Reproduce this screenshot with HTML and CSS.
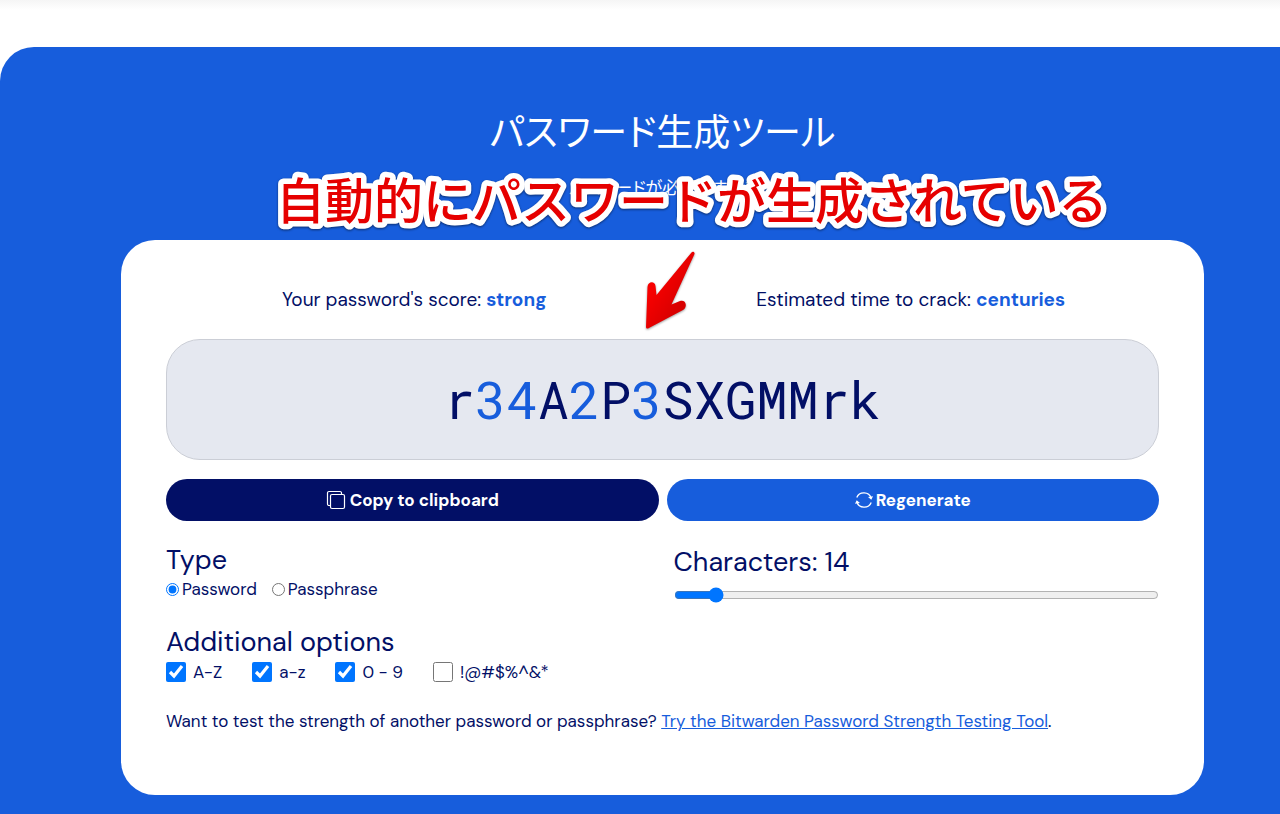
FILE: index.html
```html
<!DOCTYPE html>
<html lang="ja">
<head>
<meta charset="UTF-8">
<meta name="viewport" content="width=device-width, initial-scale=1.0">
<title>パスワード生成ツール</title>
<link rel="stylesheet" href="styles.css">
</head>
<body>

<main class="hero">
    <h1>パスワード生成ツール</h1>
    <p class="subtitle">パスワードが必要ですか？</p>

    <section class="card" lang="en">
        <div class="scores">
            <p>Your password's score: <strong>strong</strong></p>
            <p>Estimated time to crack: <strong>centuries</strong></p>
        </div>

        <div class="password">r<span>34</span>A<span>2</span>P<span>3</span>SXGMMrk</div>

        <div class="actions">
            <button type="button" class="copy">
                <svg width="20" height="20" viewBox="0 0 20 20" fill="none" stroke="currentColor" stroke-width="1.2">
                    <rect x="4.500" y="4.500" width="14" height="14" rx="1.500"/>
                    <path d="M4.500 15.500H3A1.500 1.500 0 0 1 1.500 14V3A1.500 1.500 0 0 1 3 1.500H14A1.500 1.500 0 0 1 15.500 3V4.500"/>
                </svg>
                Copy to clipboard
            </button>
            <button type="button" class="regenerate">
                <svg width="18" height="18" viewBox="0 0 18 18" fill="none" stroke="currentColor" stroke-width="1.3">
                    <path d="M1.800 6.500A7.500 7 0 0 1 16.100 7M16.200 11.500A7.500 7 0 0 1 1.900 11"/>
                    <path d="M13 6L18 5.200L16.300 8.800ZM5 12L0 12.800L1.700 9.200Z" fill="currentColor" stroke="none"/>
                </svg>
                Regenerate
            </button>
        </div>

        <div class="settings">
            <fieldset>
                <legend>Type</legend>
                <div class="types">
                    <label><input type="radio" name="type" checked>Password</label>
                    <label><input type="radio" name="type">Passphrase</label>
                </div>
            </fieldset>
            <div class="length">
                <label for="length">Characters: <output id="count" for="length">14</output></label>
                <input type="range" id="length" min="5" max="128" value="14">
            </div>
        </div>

        <fieldset>
            <legend>Additional options</legend>
            <div class="options">
                <label><input type="checkbox" checked>A-Z</label>
                <label><input type="checkbox" checked>a-z</label>
                <label><input type="checkbox" checked>0 - 9</label>
                <label><input type="checkbox">!@#$%^&amp;*</label>
            </div>
        </fieldset>

        <p class="more">Want to test the strength of another password or passphrase? <a href="#">Try the Bitwarden Password Strength Testing Tool</a>.</p>
    </section>

    <svg class="note" width="860" height="90">
        <text x="6" y="63">自動的にパスワードが生成されている</text>
    </svg>
    <svg class="arrow" width="52" height="80" viewBox="0 0 52 80">
        <defs>
            <linearGradient id="red" x1="0" y1="0" x2="1" y2="1">
                <stop offset="0.300" stop-color="#f80000"/>
                <stop offset="0.700" stop-color="#d80000"/>
            </linearGradient>
        </defs>
        <path d="M46.500 2.500C47.500 1 50 2 49.500 4L26.500 54.500L35 51C41 49 43 57 38 60L3 78.500Q1 79 1 77L2.500 37C3 31 10 31 10.500 36L11.500 45Z" fill="url(#red)"/>
    </svg>
</main>

<script>
document.getElementById("length").addEventListener("input", function() {
    document.getElementById("count").textContent = this.value;
});
</script>

</body>
</html>
```
FILE: styles.css
```css
* {
    box-sizing: border-box;
}

body {
    margin: 0;
    padding-top: 47px;
    background: linear-gradient(#f5f5f5, #fff 10px);
    color: #020f66;
    font-family: "DM Sans", "Open Sans", "Noto Sans CJK JP", sans-serif;
    font-size: 17px;
    line-height: 24px;
}

p,
h1 {
    margin: 0;
}

.hero {
    position: relative;
    min-height: calc(100vh - 47px);
    padding: 53px 76px 19px 121px;
    background-color: #175ddc;
    border-top-left-radius: 34px;
}

h1,
.subtitle {
    color: #fff;
    font-family: "Noto Sans CJK JP", sans-serif;
    font-feature-settings: "palt";
    text-align: center;
}

h1 {
    font-size: 37px;
    font-weight: 400;
    line-height: 60px;
}

.subtitle {
    margin: 15px 0 41px;
}

.card {
    padding: 46px 45px 62px;
    background-color: #fff;
    border-radius: 34px;
}

.scores {
    display: grid;
    grid-template-columns: 1fr 1fr;
    margin-bottom: 25px;
    font-size: 19px;
    line-height: 28px;
    text-align: center;
}

.scores strong {
    color: #175ddc;
}

.password {
    padding: 24px;
    background-color: #e5e8f0;
    border: 1px solid #cbced6;
    border-radius: 34px;
    font-family: "Roboto Mono", "DejaVu Sans Mono", monospace;
    font-size: 52px;
    line-height: 71px;
    text-align: center;
}

.password span {
    color: #175ddc;
}

.actions {
    display: flex;
    gap: 8px;
    margin-top: 19px;
}

.actions button {
    display: flex;
    flex: 1;
    align-items: center;
    justify-content: center;
    gap: 4px;
    height: 42px;
    border: 0;
    border-radius: 21px;
    color: #fff;
    font-family: inherit;
    font-size: 17px;
    font-weight: 700;
    cursor: pointer;
}

.actions .copy {
    background-color: #020f66;
}

.actions .regenerate {
    gap: 3px;
    background-color: #175ddc;
}

.settings {
    display: grid;
    grid-template-columns: 1fr 1fr;
    gap: 22px;
    margin: 22px 0;
}

fieldset {
    margin: 0;
    padding: 0;
    border: 0;
}

legend,
.length label {
    padding: 0;
    font-size: 27px;
    line-height: 34px;
}

input {
    margin: 0;
    accent-color: #0075ff;
}

.types,
.options {
    display: flex;
}

.types {
    gap: 15px;
}

.types label,
.options label {
    display: flex;
    align-items: center;
}

.types label {
    gap: 3px;
}

.options {
    gap: 30px;
    padding-top: 1px;
}

.options label {
    gap: 7px;
}

.options input {
    width: 20px;
    height: 20px;
}

.length {
    display: flex;
    flex-direction: column;
    gap: 8px;
    padding-top: 2px;
}

.length input {
    width: 100%;
}

.more {
    margin-top: 25px;
}

.more a {
    color: #175ddc;
}

.note {
    position: absolute;
    top: 109px;
    left: 270px;
    filter: drop-shadow(0 1px 1px rgba(0, 0, 0, 0.5));
}

.note text {
    fill: #e60000;
    stroke: #fff;
    stroke-width: 11px;
    stroke-linejoin: round;
    paint-order: stroke fill;
    font-family: "Noto Sans CJK JP", sans-serif;
    font-size: 49px;
    font-weight: 500;
}

.arrow {
    position: absolute;
    top: 203px;
    left: 645px;
    filter: drop-shadow(0 1px 1px rgba(0, 0, 0, 0.4));
}
```
